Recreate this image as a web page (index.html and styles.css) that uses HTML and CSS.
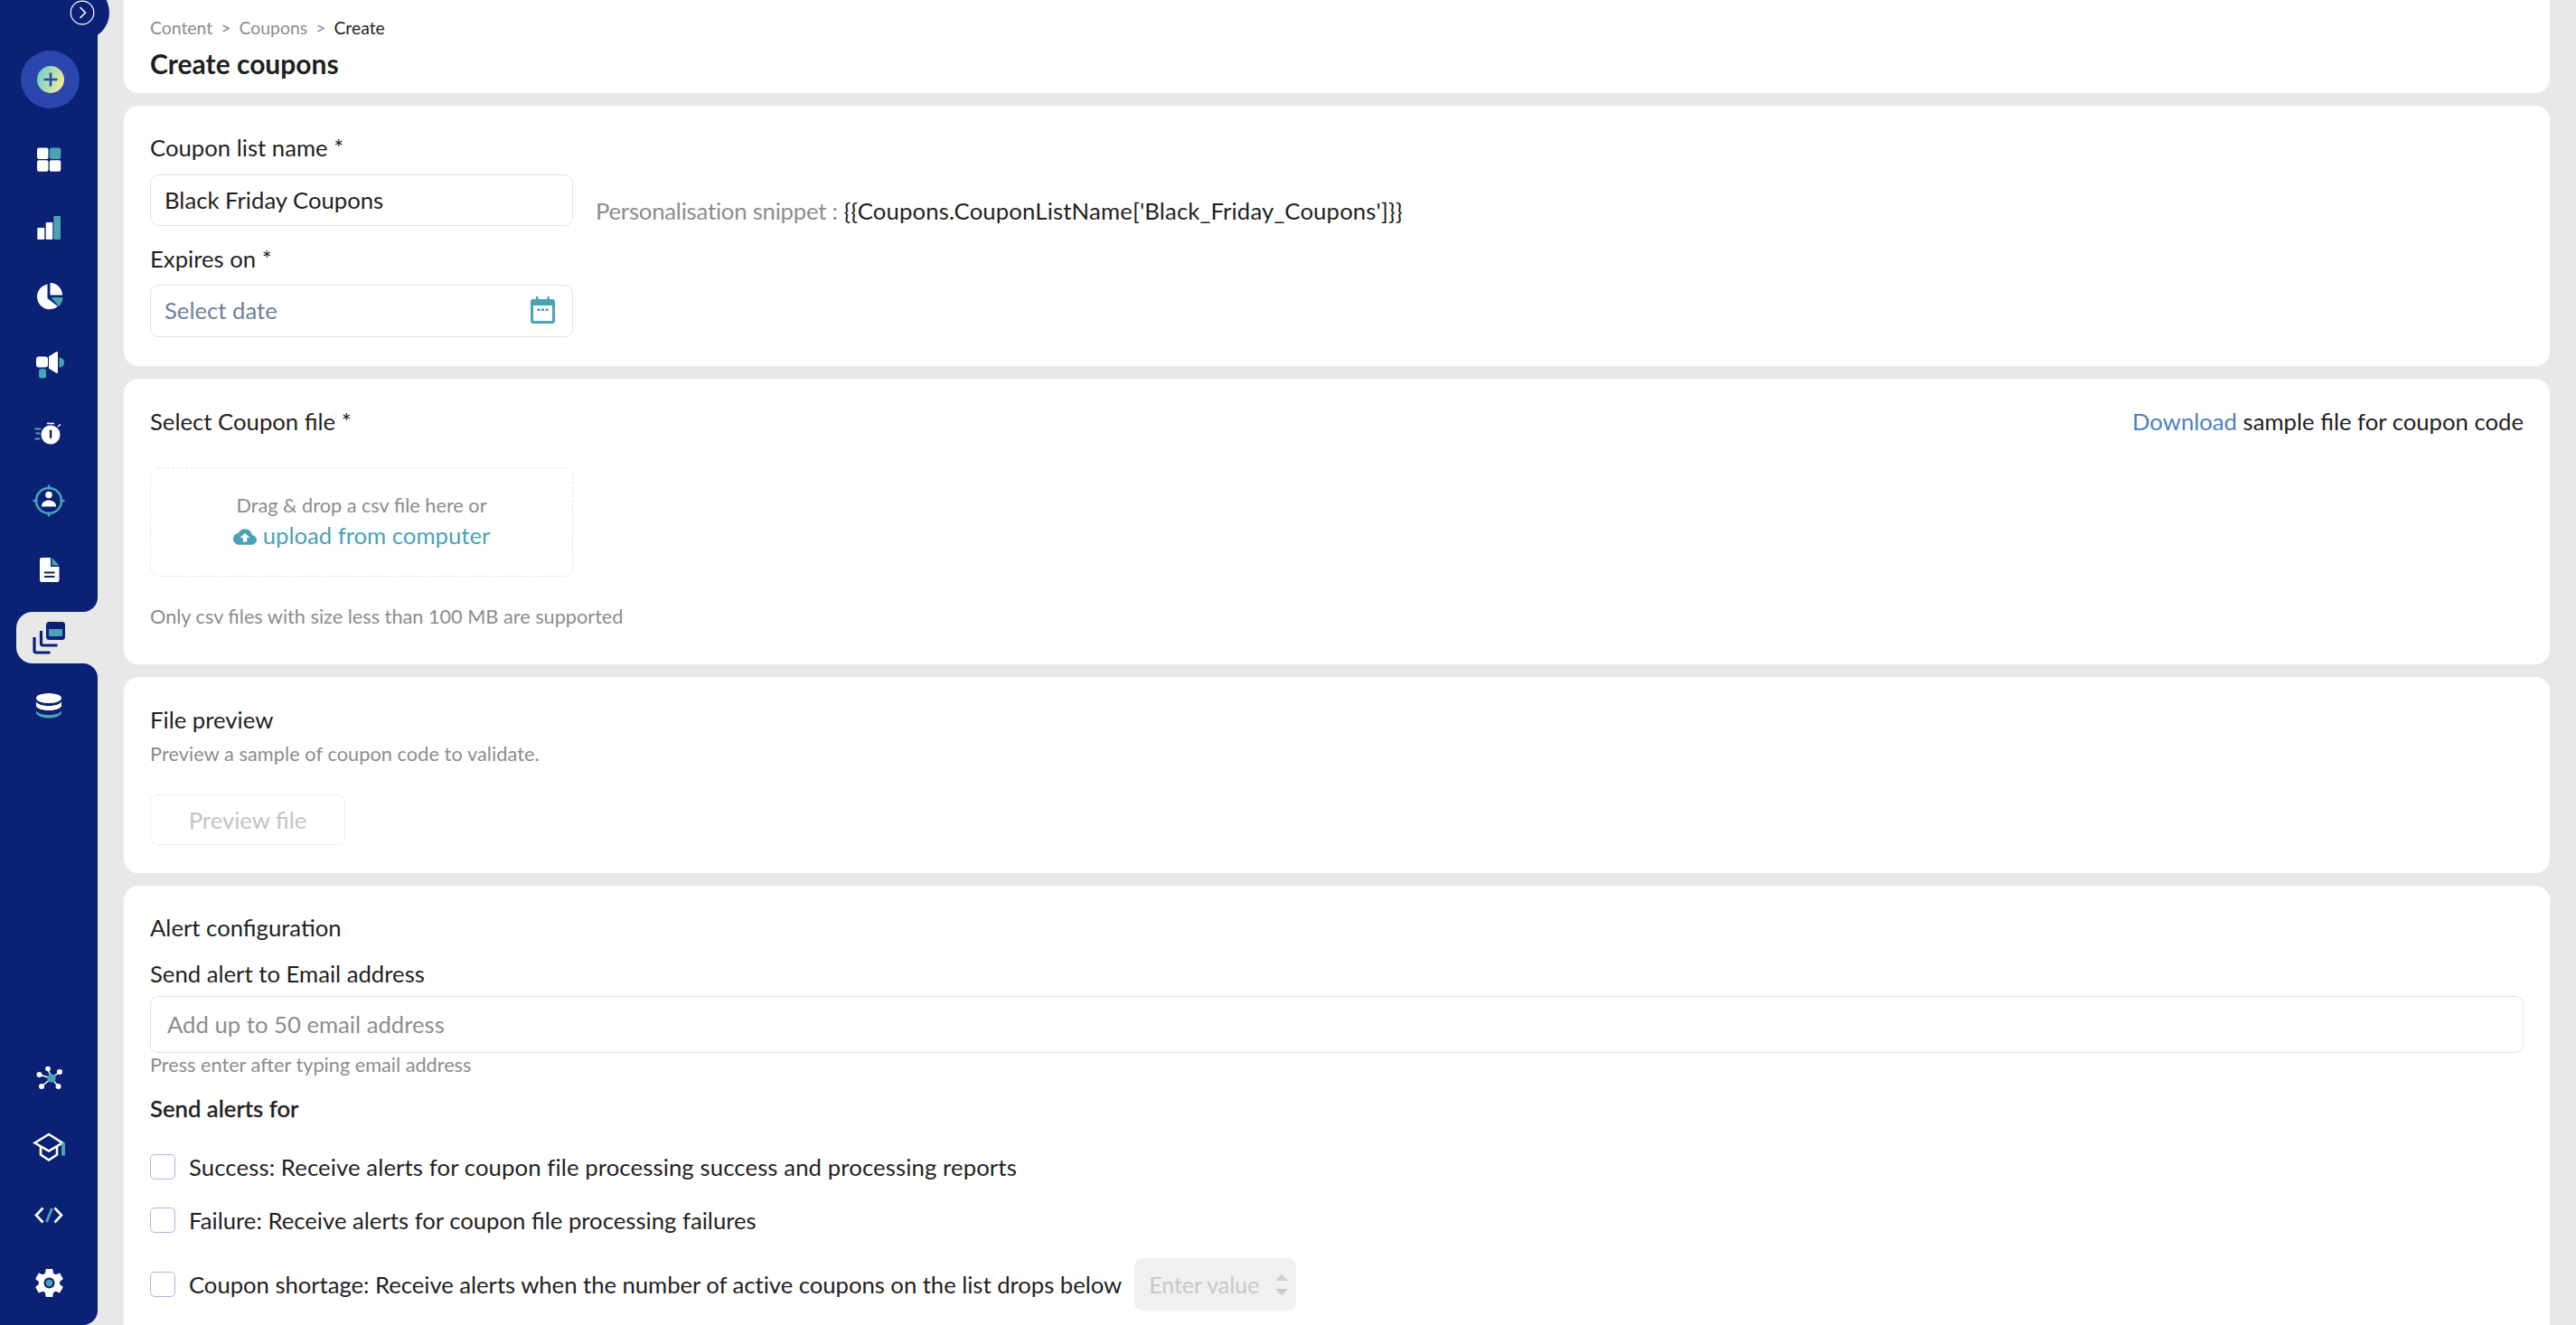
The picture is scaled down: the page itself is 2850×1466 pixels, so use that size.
FILE: index.html
```html
<!DOCTYPE html>
<html lang="en">
<head>
<meta charset="utf-8">
<title>Create coupons</title>
<link rel="stylesheet" href="styles.css">
</head>
<body>
<div class="app">
  <aside class="sidebar">
    <div class="side-top">
      <div class="toggle"><svg class="toggle-icon" viewBox="0 0 28 28"><circle cx="14" cy="14" r="12.8" fill="none" stroke="#fff" stroke-width="1.2"/><path d="M11.5 8l6 6-6 6" fill="none" stroke="#fff" stroke-width="1.6"/></svg></div>
      <div class="create"><svg class="create-icon" viewBox="0 0 30 30"><defs><linearGradient id="g" x1="0" y1="0" x2="1" y2="0.4"><stop offset="0" stop-color="#62cdc8"/><stop offset="1" stop-color="#ece8a0"/></linearGradient></defs><circle cx="15" cy="15" r="15" fill="url(#g)"/><path d="M15 7.500v15M7.500 15h15" stroke="#2b46ac" stroke-width="2.600"/></svg></div>
      <div class="nav-list">
        <div class="nav-item"><svg class="icon" viewBox="0 0 36 36"><rect x="5" y="4.500" width="12.500" height="12.500" rx="2" fill="#fff"/><rect x="18.800" y="4.500" width="12.500" height="12.500" rx="2" fill="#4aa3b5"/><rect x="5" y="18.200" width="12.500" height="12.500" rx="2" fill="#fff"/><rect x="18.800" y="18.200" width="12.500" height="12.500" rx="2" fill="#fff"/></svg></div>
        <div class="nav-item"><svg class="icon" viewBox="0 0 36 36"><rect x="5.300" y="18" width="8" height="13" rx="1" fill="#fff"/><rect x="14.700" y="12" width="7.600" height="19" rx="1" fill="#fff"/><rect x="23.300" y="5" width="7.700" height="26" rx="1" fill="#4aa3b5"/></svg></div>
        <div class="nav-item"><svg class="icon" viewBox="0 0 36 36"><path d="M16.500 4.500a14 14 0 1 0 11.500 24.500L16.500 20z" fill="#fff"/><path d="M19.500 3a13.500 13.500 0 0 1 13.500 13.500H19.500z" fill="#fff"/><path d="M20.500 19H33.500a14 14 0 0 1-4.500 10z" fill="#4aa3b5"/></svg></div>
        <div class="nav-item"><svg class="icon" viewBox="0 1.500 36 36"><rect x="4" y="11" width="13" height="12" rx="3" fill="#fff"/><path d="M18 11l8.500-5.500q1.500-.5 1.500 1.500v21q0 2-1.500 1.500L18 24z" fill="#fff"/><path d="M29.500 12a5.500 5.500 0 0 1 0 11z" fill="#4aa3b5"/><rect x="7" y="24.500" width="8" height="10.500" rx="2.500" fill="#4aa3b5"/></svg></div>
        <div class="nav-item"><svg class="icon" viewBox="0 -2 36 36"><circle cx="20" cy="18" r="10.500" fill="#fff"/><rect x="18.900" y="12.500" width="2.400" height="9.500" rx="1" fill="#0a2175"/><path d="M16 5.500h8" stroke="#fff" stroke-width="1.600"/><path d="M2.500 11.500h7M3.500 16.500h5M2.500 22.500h6" stroke="#4aa3b5" stroke-width="1.800"/><path d="M28 9l3-2.500" stroke="#fff" stroke-width="1.500"/></svg></div>
        <div class="nav-item"><svg class="icon" viewBox="0 0 36 36"><circle cx="18" cy="18" r="14" fill="none" stroke="#4aa3b5" stroke-width="2.600"/><path d="M18 0.500v5M18 30.500v5M0.500 18h5M30.500 18h5" stroke="#4aa3b5" stroke-width="2.600"/><circle cx="18" cy="11.500" r="3.800" fill="#fff"/><path d="M10 24.500c0-5 4-7 8-7s8 2 8 7z" fill="#fff"/></svg></div>
        <div class="nav-item"><svg class="icon" viewBox="0 0 36 36"><path d="M10 5h10v10h9.500v15a2 2 0 0 1-2 2H10a2 2 0 0 1-2-2V7a2 2 0 0 1 2-2z" fill="#fff"/><path d="M21.500 5l8 8.500h-8z" fill="#4aa3b5"/><path d="M13 21.500h11.500M13 26h11.500" stroke="#0a2175" stroke-width="1.800"/></svg></div>
      </div>
    </div>
    <div class="side-active">
      <div class="active-tab"><svg class="icon-active" viewBox="0 0 36 36"><rect x="15" y="0" width="21" height="20" rx="3.500" fill="#0a2175"/><rect x="18" y="8" width="15" height="8" fill="#4aa3b5"/><path d="M9.500 10v14a2 2 0 0 0 2 2H27.500" fill="none" stroke="#0a2175" stroke-width="3.200"/><path d="M2 17v15a2 2 0 0 0 2 2H19.500" fill="none" stroke="#0a2175" stroke-width="3.200"/></svg></div>
    </div>
    <div class="side-bottom">
      <div class="nav-item"><svg class="icon" viewBox="0 0 36 36"><ellipse cx="18" cy="9.500" rx="14" ry="5.500" fill="#fff"/><path d="M4 13.500c2 3 8 4.500 14 4.500s12-1.500 14-4.500v5c-2 3-8 4.500-14 4.500s-12-1.500-14-4.500z" fill="#fff"/><path d="M4 23.500c2 3 8 4.500 14 4.500s12-1.500 14-4.500v3c-2 3-8 5-14 5s-12-2-14-5z" fill="#4aa3b5"/></svg></div>
      <div class="side-tools">
        <div class="nav-item"><svg class="icon" viewBox="0 0 36 36"><path d="M21 18L7.500 14M21 18L17 7.500M21 18L30 11M21 18L10 27M21 18L28.500 27" stroke="#fff" stroke-width="1.500"/><circle cx="7.500" cy="14" r="3" fill="#fff"/><circle cx="17" cy="7.500" r="2.800" fill="#fff"/><circle cx="30" cy="11" r="3" fill="#fff"/><circle cx="10" cy="27" r="3" fill="#fff"/><circle cx="28.500" cy="27" r="3" fill="#fff"/><circle cx="21" cy="18" r="4.700" fill="#4aa3b5"/></svg></div>
        <div class="nav-item"><svg class="icon" viewBox="0 -1.500 36 36"><path d="M2.500 13L18 3.500 33 13 18 22z" fill="none" stroke="#fff" stroke-width="2.600"/><path d="M9 17v9l9 6 9-6v-9" fill="none" stroke="#fff" stroke-width="2.600"/><rect x="32" y="13" width="4" height="14" fill="#4aa3b5"/></svg></div>
        <div class="nav-item"><svg class="icon" viewBox="0 0 36 36"><path d="M11.500 10.500L4 18.500l7.500 8M24.500 10.500l7.500 8-7.500 8" fill="none" stroke="#fff" stroke-width="2.600"/><path d="M21.500 11L15.500 26" stroke="#4aa3b5" stroke-width="3"/></svg></div>
        <div class="nav-item"><svg class="icon-gear" viewBox="0 0 24 24"><path fill="#fff" d="M19.140 12.940c.04-.3.06-.61.06-.94 0-.32-.02-.64-.07-.94l2.030-1.580c.18-.14.23-.41.12-.61l-1.920-3.320c-.12-.22-.37-.29-.59-.22l-2.390.96c-.5-.38-1.030-.7-1.620-.94l-.36-2.540c-.04-.24-.24-.41-.48-.41h-3.840c-.24 0-.43.17-.47.41l-.36 2.540c-.59.24-1.130.57-1.620.94l-2.390-.96c-.22-.08-.47 0-.59.22L2.740 8.870c-.12.21-.08.47.12.61l2.030 1.580c-.05.3-.09.63-.09.94s.02.64.07.94l-2.030 1.580c-.18.14-.23.41-.12.61l1.920 3.320c.12.22.37.29.59.22l2.390-.96c.5.38 1.030.7 1.620.94l.36 2.540c.05.24.24.41.48.41h3.840c.24 0 .44-.17.47-.41l.36-2.540c.59-.24 1.130-.56 1.620-.94l2.390.96c.22.08.47 0 .59-.22l1.920-3.320c.12-.22.07-.47-.12-.61l-2.010-1.580z"/><circle cx="12" cy="12" r="3.700" fill="#0a2175"/><circle cx="12" cy="12" r="2.300" fill="#4aa3b5"/></svg></div>
      </div>
    </div>
  </aside>

  <main class="main">
    <section class="card card-head">
      <div class="crumbs"><span>Content</span><span class="sep">&gt;</span><span>Coupons</span><span class="sep">&gt;</span><span class="crumb-now">Create</span></div>
      <h1 class="title">Create coupons</h1>
    </section>

    <section class="card card-name">
      <div class="label">Coupon list name *</div>
      <div class="name-row">
        <div class="field field-short">Black Friday Coupons</div>
        <div class="snippet"><span class="snippet-key">Personalisation snippet :</span> {{Coupons.CouponListName['Black_Friday_Coupons']}}</div>
      </div>
      <div class="label label-expires">Expires on *</div>
      <div class="field field-short field-date">
        <span class="placeholder-date">Select date</span>
        <svg class="cal" viewBox="0 0 27 30"><path d="M6 0h2.500v3h10V0H21v3h3a3 3 0 0 1 3 3v21a3 3 0 0 1-3 3H3a3 3 0 0 1-3-3V6a3 3 0 0 1 3-3h3z" fill="#4aa3b5"/><rect x="3" y="10" width="21" height="17" fill="#fff"/><path d="M7.500 13.500h3v2.500h-3zM12 13.500h3v2.500h-3zM16.500 13.500h3v2.500h-3z" fill="#4aa3b5"/></svg>
      </div>
    </section>

    <section class="card card-file">
      <div class="row-between">
        <div class="label">Select Coupon file *</div>
        <div class="label"><span class="link">Download</span> sample file for coupon code</div>
      </div>
      <div class="dropbox">
        <div class="drop-text">Drag &amp; drop a csv file here or</div>
        <div class="drop-link"><svg class="cloud" viewBox="0 0 24 24"><path fill="#4aa3b5" d="M19.350 10.040C18.670 6.590 15.640 4 12 4 9.110 4 6.600 5.640 5.350 8.040 2.340 8.360 0 10.910 0 14c0 3.310 2.690 6 6 6h13c2.760 0 5-2.240 5-5 0-2.640-2.050-4.780-4.650-4.960zM14 13v4h-4v-4H7l5-5 5 5h-3z"/></svg>upload from computer</div>
      </div>
      <div class="note note-file">Only csv files with size less than 100 MB are supported</div>
    </section>

    <section class="card card-preview">
      <div class="label">File preview</div>
      <div class="note note-preview">Preview a sample of coupon code to validate.</div>
      <div class="btn-disabled">Preview file</div>
    </section>

    <section class="card card-alert">
      <div class="label">Alert configuration</div>
      <div class="label label-email">Send alert to Email address</div>
      <div class="field field-email">Add up to 50 email address</div>
      <div class="hint">Press enter after typing email address</div>
      <div class="label label-for">Send alerts for</div>
      <div class="check-row check-first"><span class="box"></span><span class="check-label">Success: Receive alerts for coupon file processing success and processing reports</span></div>
      <div class="check-row check-second"><span class="box"></span><span class="check-label">Failure: Receive alerts for coupon file processing failures</span></div>
      <div class="check-row check-third"><span class="box"></span><span class="check-label">Coupon shortage: Receive alerts when the number of active coupons on the list drops below</span>
        <div class="num-input"><span>Enter value</span><span class="spin"><i class="up"></i><i class="down"></i></span></div>
      </div>
    </section>
  </main>
</div>
</body>
</html>
```

FILE: styles.css
```css
* { box-sizing: border-box; }
html, body { margin: 0; height: 100%; }
body {
  background: #e8e8e8;
  color: #1f1f1f;
  font-family: "Lato", "Liberation Sans", sans-serif;
  font-size: 25.7px;
  overflow: hidden;
}
.app { display: flex; height: 1466px; overflow: hidden; }

/* Sidebar */
.sidebar { width: 108px; flex: none; display: flex; flex-direction: column; background: #e8e8e8; }
.side-top {
  position: relative;
  height: 677px;
  background: #0a2175;
  border-bottom-right-radius: 16px;
  padding-top: 56px;
}
.toggle {
  position: absolute;
  left: 61px;
  top: -16px;
  width: 60px;
  height: 60px;
  border-radius: 50%;
  background: #0a2175;
  display: flex;
  align-items: center;
  justify-content: center;
}
.toggle-icon { width: 28px; height: 28px; }
.create {
  width: 65px;
  height: 64px;
  margin-left: 23px;
  border-radius: 50%;
  background: #2b46ac;
  display: flex;
  align-items: center;
  justify-content: center;
}
.create-icon { width: 30px; height: 30px; }
.nav-list { margin-top: 19px; }
.nav-item { height: 75.5px; display: flex; align-items: center; justify-content: center; }
.icon { width: 36px; height: 36px; display: block; overflow: visible; }
.icon-gear { width: 39px; height: 39px; display: block; }
.side-active { height: 57px; background: #0a2175; padding-left: 18px; }
.active-tab {
  height: 100%;
  background: #e8e8e8;
  border-radius: 18px 0 0 18px;
  display: flex;
  align-items: center;
  padding-left: 18px;
}
.icon-active { width: 36px; height: 36px; display: block; }
.side-bottom {
  flex: 1;
  background: #0a2175;
  border-radius: 0 16px 16px 0;
  display: flex;
  flex-direction: column;
  justify-content: space-between;
  padding: 9px 0 9px;
}

/* Main */
.main {
  flex: 1;
  min-width: 0;
  padding: 0 29px;
  display: flex;
  flex-direction: column;
  gap: 14px;
}
.card { background: #fff; border-radius: 16px; padding: 32px 29px; flex: none; }
.card-head { height: 103px; padding: 19px 29px 0; border-radius: 0 0 16px 16px; }
.crumbs { display: flex; gap: 9px; font-size: 19.4px; line-height: 24px; color: #8c8c8c; }
.crumb-now { color: #1f1f1f; }
.title { margin: 7px 0 0; font-size: 30px; line-height: 40px; font-weight: 700; color: #1f1f1f; }

.label { font-size: 25.7px; line-height: 28px; padding-bottom: 2px; }
.field {
  border: 1.5px solid #dde3f0;
  border-radius: 9px;
  background: #fff;
  display: flex;
  align-items: center;
  font-size: 25.7px;
  padding-bottom: 2px;
}
.field-short { width: 468px; height: 57px; padding: 0 15px 2px; }
.name-row { display: flex; margin-top: 14px; align-items: flex-end; }
.snippet { margin: 0 0 2px 25px; line-height: 30px; letter-spacing: 0.15px; }
.snippet-key { color: #8c8c8c; letter-spacing: -0.22px; }
.label-expires { margin-top: 22px; }
.field-date { margin-top: 13px; height: 58px; justify-content: space-between; color: #6f7f9f; }
.cal { width: 27px; height: 30px; margin-right: 4px; }

.card-file { height: 316px; padding-top: 33px; }
.row-between { display: flex; justify-content: space-between; }
.link { color: #4d80c4; }
.dropbox {
  width: 468px;
  height: 121px;
  margin-top: 35px;
  border: 1px dashed #e0e3ee;
  border-radius: 9px;
  display: flex;
  flex-direction: column;
  align-items: center;
  padding-top: 28px;
}
.drop-text { font-size: 21.7px; line-height: 26px; color: #8c8c8c; }
.drop-link { margin-top: 5px; font-size: 25.7px; line-height: 30px; color: #4aa3b5; display: flex; align-items: center; }
.cloud { width: 26px; height: 26px; margin: 3px 7px 0 0; }
.note { font-size: 21.7px; line-height: 26px; color: #8c8c8c; }
.note-file { margin-top: 31px; }

.card-preview { height: 217px; padding-top: 33px; }
.note-preview { margin-top: 9px; letter-spacing: 0.08px; }
.btn-disabled {
  width: 216px;
  height: 56px;
  margin-top: 32px;
  border: 1.5px solid #efefef;
  border-radius: 8px;
  color: #c4c4c4;
  display: flex;
  align-items: center;
  justify-content: center;
}

.label-email { margin-top: 21px; }
.field-email { margin-top: 9px; height: 63px; padding: 0 18px 2px; color: #8c8c8c; }
.hint { margin-top: 1px; font-size: 21.7px; line-height: 24px; color: #8c8c8c; }
.label-for { margin-top: 22px; font-weight: 500; -webkit-text-stroke: 0.3px #1f1f1f; }
.check-row { display: flex; align-items: center; height: 28px; }
.check-first { margin-top: 35px; letter-spacing: 0.11px; }
.check-second { margin-top: 31px; }
.check-third { margin-top: 28px; height: 58px; letter-spacing: -0.04px; }
.box {
  width: 28px;
  height: 28px;
  flex: none;
  border: 1.5px solid #a9b7dd;
  border-radius: 5px;
  background: #fff;
  margin-right: 15px;
}
.num-input {
  width: 179px;
  height: 58px;
  margin-left: 14px;
  padding: 0 9px 0 16px;
  background: #f0f0f0;
  border-radius: 9px;
  color: #c8c8c8;
  font-size: 25px;
  display: flex;
  align-items: center;
  justify-content: space-between;
}
.spin { display: flex; flex-direction: column; gap: 9px; }
.spin i { display: block; width: 0; height: 0; border-left: 7px solid transparent; border-right: 7px solid transparent; }
.spin .up { border-bottom: 7px solid #d0d0d0; }
.spin .down { border-top: 7px solid #c8c8c8; }
```
